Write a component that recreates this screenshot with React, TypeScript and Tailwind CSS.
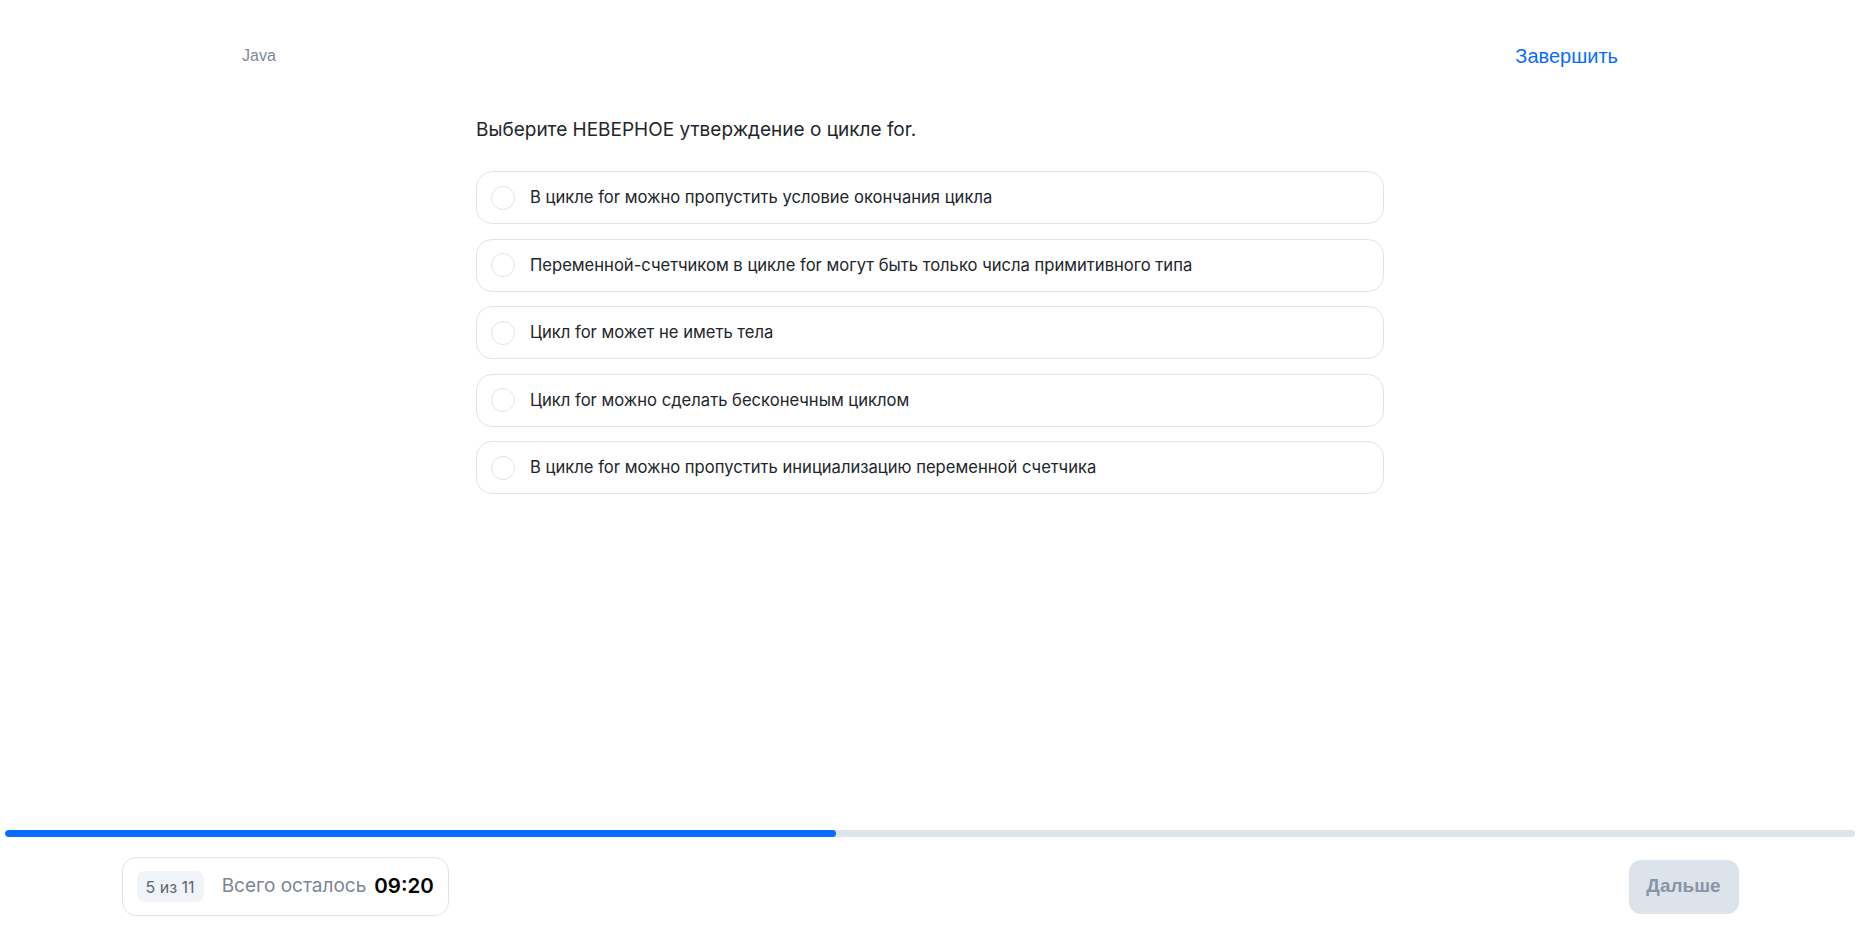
import { useState } from 'react';

const options = [
  'В цикле for можно пропустить условие окончания цикла',
  'Переменной-счетчиком в цикле for могут быть только числа примитивного типа',
  'Цикл for может не иметь тела',
  'Цикл for можно сделать бесконечным циклом',
  'В цикле for можно пропустить инициализацию переменной счетчика',
];

const current = 5;
const total = 11;
// the filled part stops a little short of current/total in the original
const progress = 44.9;

export default function App() {
  const [selected, setSelected] = useState<number | null>(null);

  return (
    <div className="h-[935px] flex flex-col bg-white font-['Inter',sans-serif] text-[#22262c]">
      {/* Header */}
      <div className="w-[1376px] mx-auto flex items-center justify-between pt-[41px] font-['Liberation_Sans',Arial,sans-serif]">
        <span className="text-[16px] text-[#7d889b]">Java</span>
        <button className="text-[20px] text-[#0a6cff]">Завершить</button>
      </div>

      {/* Question */}
      <div className="w-[908px] mx-auto mt-[47px]">
        <h1 className="text-[19px] leading-6">Выберите НЕВЕРНОЕ утверждение о цикле for.</h1>
        <div className="mt-[29px] flex flex-col gap-[14.5px]">
          {options.map((text, i) => (
            <button
              key={i}
              onClick={() => setSelected(i)}
              className="h-[53px] flex items-center gap-[15px] px-[14px] border border-[#dfe4ec] rounded-[16px] text-left"
            >
              <span
                className={
                  'w-[24px] h-[24px] rounded-full border ' +
                  (selected === i ? 'border-[7px] border-[#0a6cff]' : 'border-[#dfe4ec]')
                }
              />
              <span className="text-[16.6px] text-[#22262b]">{text}</span>
            </button>
          ))}
        </div>
      </div>

      <div className="flex-1" />

      {/* Progress */}
      <div className="mx-[5px] h-[7px] rounded-full bg-[#dde3eb] overflow-hidden">
        <div className="h-full rounded-full bg-[#0a6cff]" style={{ width: `${progress}%` }} />
      </div>

      {/* Footer */}
      <div className="w-[1617px] mx-auto flex items-center justify-between mt-[20px] mb-[19px]">
        <div className="h-[59px] flex items-center pl-[14px] pr-[14px] border border-[#dfe4ec] rounded-[14px]">
          <span className="h-[31px] px-[9px] flex items-center rounded-[8px] bg-[#f0f3f8] text-[16px] text-[#5d6674]">
            {current} из {total}
          </span>
          <span className="ml-[18px] text-[19px] text-[#7c8694]">Всего осталось</span>
          <span className="ml-[8px] text-[20.5px] font-semibold text-black">09:20</span>
        </div>
        <button
          disabled
          className="h-[54px] w-[110px] rounded-[12px] bg-[#dde3eb] text-[19px] font-bold text-[#8795a5] font-['Liberation_Sans',Arial,sans-serif]"
        >
          Дальше
        </button>
      </div>
    </div>
  );
}
